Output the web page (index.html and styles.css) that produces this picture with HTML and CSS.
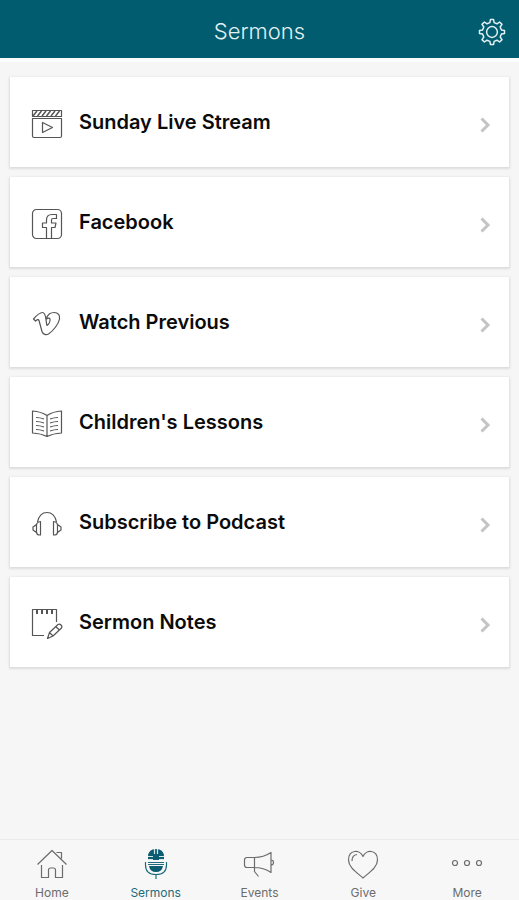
FILE: index.html
```html
<!DOCTYPE html>
<html lang="en">
<head>
<meta charset="utf-8">
<meta name="viewport" content="width=device-width, initial-scale=1">
<title>Sermons</title>
<link rel="stylesheet" href="styles.css">
</head>
<body>
<header class="topbar">
  <h1 class="title">Sermons</h1>
  <button class="settings" type="button" aria-label="Settings">
    <svg class="gear" viewBox="0 0 28 28"><path d="M11.9 4.6 12.4 1.5h3.2l.5 3.1 2.9 1.2 2.6-1.8 2.4 2.4-1.8 2.6 1.2 2.9 3.1.5v3.2l-3.1.5-1.2 2.9 1.8 2.6-2.4 2.4-2.6-1.8-2.9 1.2-.5 3.1h-3.2l-.5-3.1-2.9-1.2-2.6 1.8-2.4-2.4 1.8-2.6-1.2-2.9-3.1-.5v-3.2l3.1-.5 1.2-2.9-1.8-2.6 2.4-2.4 2.6 1.8z"/><circle cx="14" cy="14" r="5.4"/></svg>
  </button>
</header>
<main class="list">
  <a class="card" href="#live">
    <svg class="icon" viewBox="0 0 32 32"><path d="M1.500 2.500h29v6h-29zM1.500 10.500h29v17.500q0 1.500-1.500 1.500h-26q-1.500 0-1.500-1.500zM11.500 14.500v10l10-5z"/><path class="medium" d="m2 8 4-5M6.500 8l4-5M11 8l4-5M15.500 8l4-5M20 8l4-5M24.500 8l4-5"/></svg>
    <span class="label">Sunday Live Stream</span>
    <svg class="chevron" viewBox="0 0 12 16"><path d="m2.500 1.500 6.500 6.500-6.500 6.500"/></svg>
  </a>
  <a class="card" href="#facebook">
    <svg class="icon" viewBox="0 0 32 32"><rect x="1.500" y="1.500" width="29" height="29" rx="4"/><path d="M15.500 30V19.500h-4v-4.500h4v-3q0-5.500 5.500-5.500h4.500v4h-3.500q-1.500 0-1.500 1.500v3h4.500l-1 4.500h-3.500V30"/></svg>
    <span class="label">Facebook</span>
    <svg class="chevron" viewBox="0 0 12 16"><path d="m2.500 1.500 6.500 6.500-6.500 6.500"/></svg>
  </a>
  <a class="card" href="#previous">
    <svg class="icon" viewBox="0 0 32 32"><path d="M2.500 11C5.500 7.500 8.500 4.500 11.500 4.500c4 0 3 8.500 4.500 13 2-1 3.500-4.500 3-6.500-.5-1.500-2-1-3.500 0 .5-4.500 4.500-6.500 7.500-6.500 4.500 0 6 3 5.500 6.500-.8 5-6.500 12-11 15-2.500 1.500-5.500.5-6.500-2.500L8 12.500c-.5-1.500-2-.8-3.500.5z"/></svg>
    <span class="label">Watch Previous</span>
    <svg class="chevron" viewBox="0 0 12 16"><path d="m2.500 1.500 6.500 6.500-6.500 6.500"/></svg>
  </a>
  <a class="card" href="#children">
    <svg class="icon" viewBox="0 0 32 32"><path d="M16 7.500Q10 3.500 1.500 3v22Q10 25.500 16 28.500q6-3 14.500-3.500V3Q22 3.500 16 7.500zV28.500M5 9.500q4 0 8 1.500M5 13.500q4 0 8 1.500M5 17.500q4 0 8 1.500M5 21.500q4 0 8 1.500M27 9.500q-4 0-8 1.500M27 13.500q-4 0-8 1.500M27 17.500q-4 0-8 1.500M27 21.500q-4 0-8 1.500"/></svg>
    <span class="label">Children's Lessons</span>
    <svg class="chevron" viewBox="0 0 12 16"><path d="m2.500 1.500 6.500 6.500-6.500 6.500"/></svg>
  </a>
  <a class="card" href="#podcast">
    <svg class="icon" viewBox="0 0 32 32"><path d="M6.500 14Q8.500 4.500 16 4.500T25.500 14M9.500 13.500v13.500h-1.500q-2.500-.5-2.500-3v-7.500q.5-2.500 4-3zM22.500 13.500v13.500h1.500q2.500-.5 2.500-3v-7.500q-.5-2.500-4-3zM5.500 16.500 2 19v3l3.500 2.500M26.500 16.500 30 19v3l-3.500 2.500"/></svg>
    <span class="label">Subscribe to Podcast</span>
    <svg class="chevron" viewBox="0 0 12 16"><path d="m2.500 1.500 6.500 6.500-6.500 6.500"/></svg>
  </a>
  <a class="card" href="#notes">
    <svg class="icon" viewBox="0 0 32 32"><path d="M13 27.500H1.500v-26h24V14M16.500 30.500l2-6 8.500-8q1.500-1 3 .5t.5 3l-8.500 8zM18.500 24.500l3.500 3.500M24.500 18.500l4 3.500"/><path class="thick" d="M6 2v4M11 2v4M16 2v4M21 2v4"/></svg>
    <span class="label">Sermon Notes</span>
    <svg class="chevron" viewBox="0 0 12 16"><path d="m2.500 1.500 6.500 6.500-6.500 6.500"/></svg>
  </a>
</main>
<nav class="tabs">
  <a class="tab" href="#home">
    <svg class="icon" viewBox="0 0 32 32"><path d="M1.500 16.500 16 2.500l14.500 14M5.500 17v12.500h7V22q0-2 2-2h3q2 0 2 2v7.500h7V17M20.500 4.500h5v6"/></svg>
    <span>Home</span>
  </a>
  <a class="tab active" href="#sermons" aria-current="page">
    <svg class="icon" viewBox="0 0 32 32"><path class="solid" d="M8 12V9q0-8 8-8t8 8v3zM9 18h14q-1 6-7 6t-7-6z"/><path d="M8 14.500h16M8 16.500h16M5.500 14v3q0 9.500 10.500 9.500T26.500 17v-3M16 27v4"/><path class="light" d="M14.500 1v5M17.500 1v5M8 8.500h5M19 8.500h5M8 11.500h5M19 11.500h5"/></svg>
    <span>Sermons</span>
  </a>
  <a class="tab" href="#events">
    <svg class="icon" viewBox="0 0 32 32"><path d="M11.500 9.500H4q-2.500 0-2.500 2.500v5q0 2.500 2.500 2.500h7.500zM11.500 9.500q9 0 16.500-5v20q-7.500-5-16.500-5M28 12q2.500 0 2.500 2.500T28 17M11.500 19.500v4l4 5"/></svg>
    <span>Events</span>
  </a>
  <a class="tab" href="#give">
    <svg class="icon" viewBox="0 0 32 32"><path d="M16 8.500C13 1 1.500 1.500 1.500 12c0 7 7.500 12 14.500 18 7-6 14.500-11 14.500-18C30.500 1.500 19 1 16 8.500zM5 13q0-6 5-6.500"/></svg>
    <span>Give</span>
  </a>
  <a class="tab" href="#more">
    <svg class="icon" viewBox="0 0 32 32"><circle cx="4" cy="15" r="2.500"/><circle cx="16" cy="15" r="2.500"/><circle cx="28" cy="15" r="2.500"/></svg>
    <span>More</span>
  </a>
</nav>
</body>
</html>
```
FILE: styles.css
```css
* { box-sizing: border-box; }
body {
  margin: 0;
  min-height: 100vh;
  display: flex;
  flex-direction: column;
  background: #f6f6f6;
  font-family: Inter, "Liberation Sans", sans-serif;
}
a { color: inherit; text-decoration: none; }
svg { fill: none; stroke: currentColor; flex: none; }
.topbar {
  display: grid;
  grid-template-columns: 1fr auto 1fr;
  align-items: center;
  height: 62px;
  padding: 5px 13px 0;
  background: #005c6e;
  border-bottom: 4px solid #fbfdfd;
  color: #e2f1f3;
}
.title {
  grid-column: 2;
  margin: 0;
  padding-bottom: 2px;
  font-size: 22px;
  font-weight: 300;
  line-height: 28px;
}
.settings {
  justify-self: end;
  display: flex;
  padding: 0;
  border: 0;
  background: none;
  color: inherit;
}
.gear { width: 28px; height: 28px; stroke-width: 1.5; stroke-linejoin: round; }
.list {
  flex: 1;
  display: flex;
  flex-direction: column;
  gap: 10px;
  padding: 15px 10px;
}
.card {
  display: flex;
  align-items: center;
  gap: 16px;
  height: 90px;
  padding: 4px 18px 0 21px;
  background: #fff;
  box-shadow: 0 1px 2px 1px #dcdcdc;
  color: #0b0b0b;
}
.icon { width: 32px; height: 32px; stroke-width: 1.2; stroke-linejoin: round; }
.card .icon { color: #555; }
.icon .medium { stroke-width: 1.5; }
.icon .thick { stroke-width: 2; }
.label {
  flex: 1;
  padding-bottom: 4px;
  font-size: 20px;
  font-weight: 600;
  line-height: 24px;
}
.chevron { width: 12px; height: 16px; margin-top: 2px; color: #c4c4c4; stroke-width: 3; }
.tabs {
  display: grid;
  grid-template-columns: repeat(5, 1fr);
  height: 61px;
  border-top: 1px solid #ebebeb;
  background: #f7f7f7;
}
.tab {
  display: flex;
  flex-direction: column;
  align-items: center;
  gap: 6px;
  padding-top: 8px;
  color: #6c6c6c;
  font-size: 12px;
  line-height: 14px;
}
.active { color: #1a6b7b; }
.icon .solid { fill: #0d5d72; stroke: none; }
.icon .light { stroke: #d5e6ea; }
```
